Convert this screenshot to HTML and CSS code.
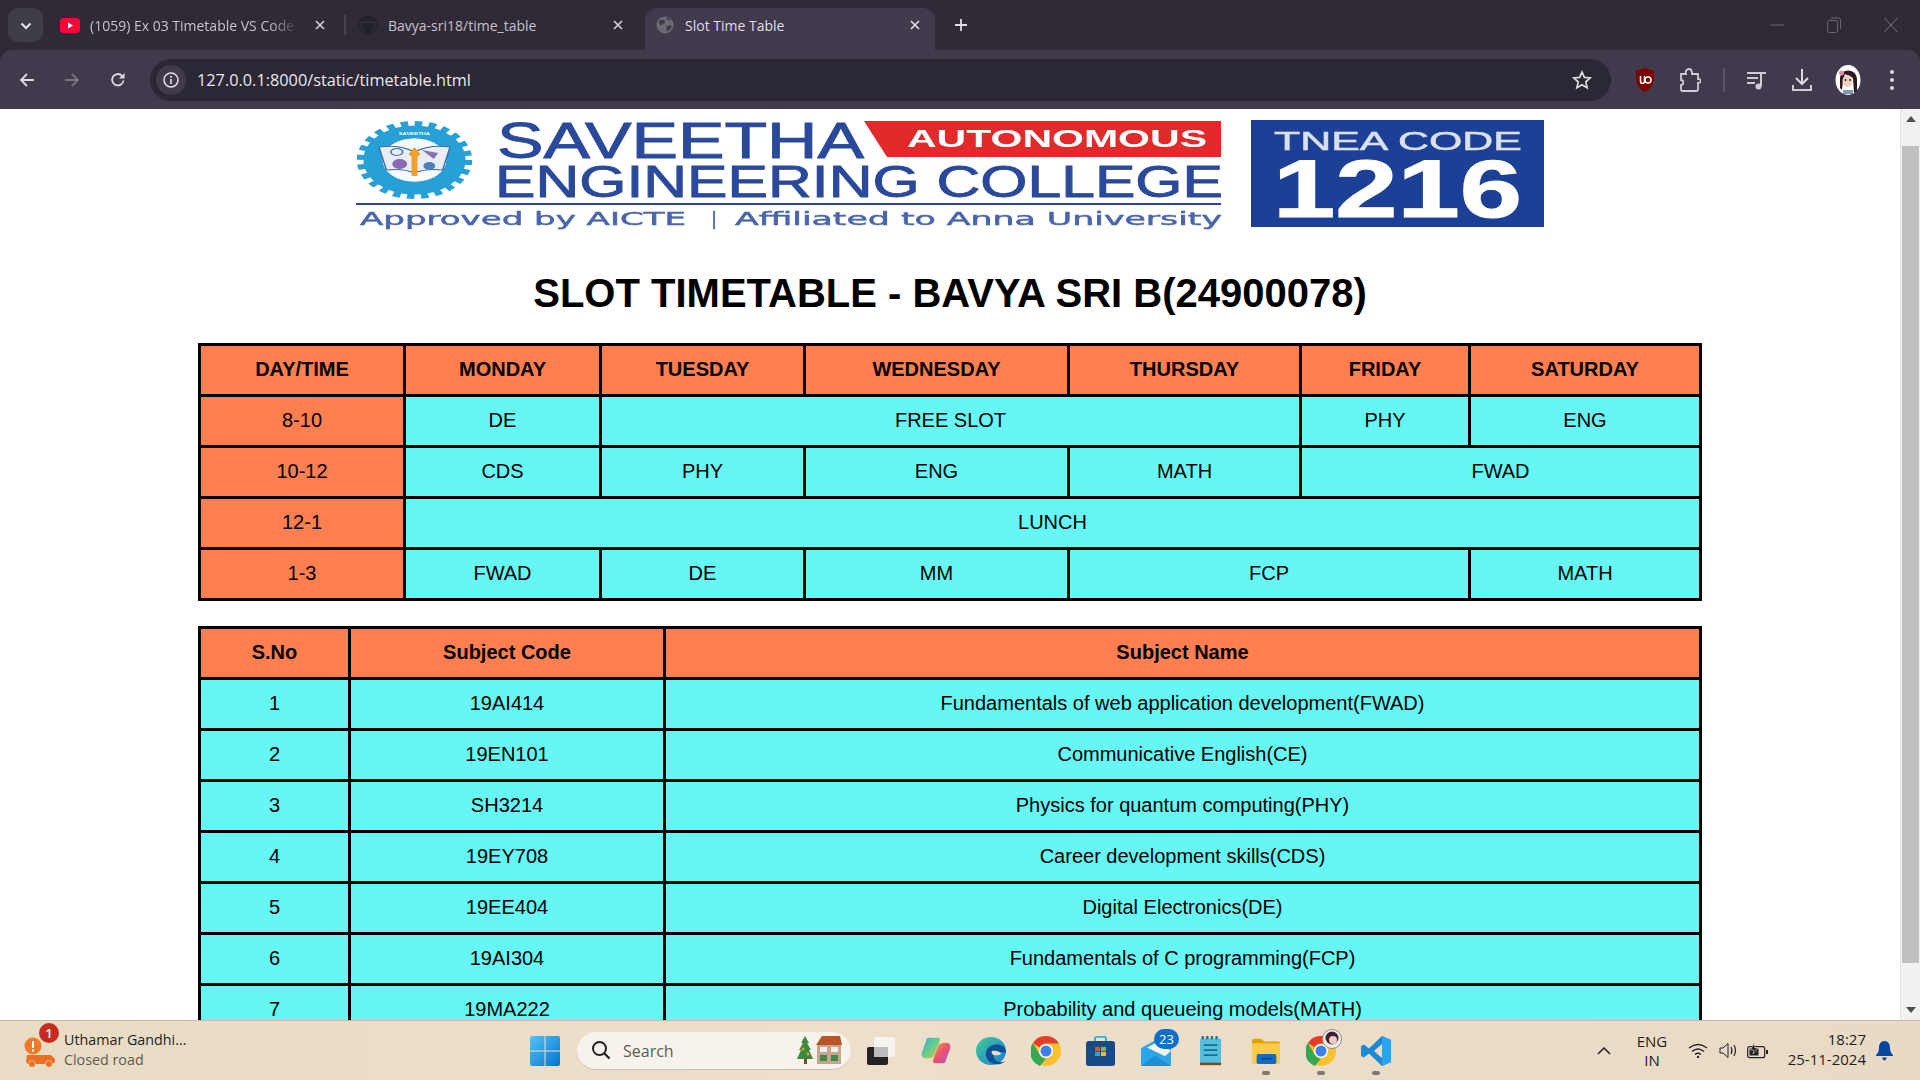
FILE: index.html
```html
<!DOCTYPE html>
<html lang="en">
    <head>
        <title>Slot Time Table</title>
        <meta charset="utf-8">
        <link rel="stylesheet" href="styles.css">
    </head>
    <body>
        <header class="tabstrip">
            <button class="tab-list"><svg width="12" height="8" viewBox="0 0 12 8"><path d="M1.5 1.5 6 6l4.5-4.5" fill="none" stroke="#e8e6ec" stroke-width="2"/></svg></button>
            <div class="tab tab-first">
                <svg class="favicon" width="20" height="15" viewBox="0 0 20 15"><rect width="20" height="15" rx="3.5" fill="#f6073a"/><path d="M8 4.5 13 7.5 8 10.500z" fill="#fff"/></svg>
                <span class="tab-title">(1059) Ex 03 Timetable VS Code</span>
                <svg class="tab-close" width="10" height="10" viewBox="0 0 10 10"><path d="M1 1l8 8M9 1 1 9" stroke="#d6d2dc" stroke-width="1.600"/></svg>
            </div>
            <div class="tab-sep"></div>
            <div class="tab tab-second">
                <svg class="favicon" width="20" height="20" viewBox="0 0 20 20"><circle cx="10" cy="10" r="9.500" fill="#24202a"/><path d="M6 18v-3c-2 0-3-1-3-5 0-2 1-3 1-3l3 .5h6l3-.5s1 1 1 3c0 4-1 5-3 5v3" fill="none" stroke="#33303a" stroke-width="1.500"/></svg>
                <span class="tab-title">Bavya-sri18/time_table</span>
                <svg class="tab-close" width="10" height="10" viewBox="0 0 10 10"><path d="M1 1l8 8M9 1 1 9" stroke="#d6d2dc" stroke-width="1.600"/></svg>
            </div>
            <div class="tab tab-active">
                <svg class="favicon" width="18" height="18" viewBox="0 0 18 18"><circle cx="9" cy="9" r="8.500" fill="#6b6a70"/><path d="M3 5c3-2 5-1 6 0 1 2-2 2-3 4-1 1-3 0-3-4zM11 10c2-1 4-1 5 0-1 3-3 5-5 5-1-2-1-3 0-5zM10 1.500c2 0 4 1 5 3-2 0-4 0-5-3z" fill="#413a4c"/></svg>
                <span class="tab-title">Slot Time Table</span>
                <svg class="tab-close" width="10" height="10" viewBox="0 0 10 10"><path d="M1 1l8 8M9 1 1 9" stroke="#e4e1e8" stroke-width="1.600"/></svg>
            </div>
            <svg class="new-tab" width="14" height="14" viewBox="0 0 14 14"><path d="M7 1v12M1 7h12" stroke="#dedbe3" stroke-width="1.800"/></svg>
            <div class="window-btns">
                <svg width="14" height="14" viewBox="0 0 14 14"><path d="M0 7h14" stroke="#6a6670"/></svg>
                <svg width="14" height="16" viewBox="0 0 14 16"><rect x=".5" y="3.500" width="10" height="12" rx="2" fill="none" stroke="#6a6670"/><path d="M4 1h7.500q2 0 2 2v9" fill="none" stroke="#6a6670"/></svg>
                <svg width="14" height="16" viewBox="0 0 14 16"><path d="M.5 1l13 14M13.500 1 .5 15" stroke="#77737c" fill="none"/></svg>
            </div>
        </header>

        <nav class="toolbar">
            <svg class="nav-back" width="16" height="16" viewBox="0 0 16 16"><path d="M15 8H2M8 2 2 8l6 6" fill="none" stroke="#dcd9e1" stroke-width="1.800"/></svg>
            <svg class="nav-fwd" width="16" height="16" viewBox="0 0 16 16"><path d="M1 8h13M8 2l6 6-6 6" fill="none" stroke="#77727f" stroke-width="1.800"/></svg>
            <svg class="nav-reload" width="16" height="16" viewBox="0 0 16 16"><path d="M13.500 8.500A5.700 5.700 0 1 1 12 3.800" fill="none" stroke="#dcd9e1" stroke-width="1.800"/><path d="M14.500 1v5.500H9z" fill="#dcd9e1"/></svg>
            <div class="omnibox">
                <span class="site-info"><svg width="16" height="16" viewBox="0 0 16 16"><circle cx="8" cy="8" r="7" fill="none" stroke="#e4e1e8" stroke-width="1.500"/><path d="M8 7v5" stroke="#e4e1e8" stroke-width="1.600"/><circle cx="8" cy="4.700" r="1" fill="#e4e1e8"/></svg></span>
                <span class="url">127.0.0.1:8000/static/timetable.html</span>
                <svg class="star" width="20" height="20" viewBox="0 0 20 20"><path d="M10 2l2.400 5.400 5.800.6-4.400 3.900 1.300 5.800L10 14.700l-5.100 3 1.300-5.800L1.800 8l5.800-.6z" fill="none" stroke="#dcd9e1" stroke-width="1.700"/></svg>
            </div>
            <div class="toolbar-icons">
                <svg class="ti-ublock" width="20" height="24" viewBox="0 0 20 24"><path d="M10 0l9 3c0 10 0 16-9 21C1 19 1 13 1 3z" fill="#800000"/><path d="M5.500 8v5q0 2.500 2 2.500t2-2.500V8" fill="none" stroke="#fff" stroke-width="1.500"/><circle cx="13" cy="12" r="3" fill="none" stroke="#fff" stroke-width="1.500"/></svg>
                <svg class="ti-puzzle" width="22" height="24" viewBox="0 0 22 24"><path d="M2 6h5c-1-3 1-5 3-5s3 2 3 5h6v5c2 0 3 1 3 2s-1 2-3 2v6q0 2-2 2H3l-1-1v-5c3 0 3-5 0-5z" fill="none" stroke="#cfc9da" stroke-width="1.800"/></svg>
                <span class="ti-sep"></span>
                <svg class="ti-media" width="20" height="20" viewBox="0 0 20 20"><path d="M0 3h14M0 8h11M0 13h8" stroke="#cfc9da" stroke-width="2"/><path d="M14 16V3h5" fill="none" stroke="#cfc9da" stroke-width="2"/><circle cx="11.500" cy="16.500" r="3" fill="#cfc9da"/></svg>
                <svg class="ti-down" width="20" height="24" viewBox="0 0 20 24"><path d="M10 1v15M4 10l6 6 6-6" fill="none" stroke="#dcd9e1" stroke-width="2"/><path d="M1 17v5h18v-5" fill="none" stroke="#cfc9da" stroke-width="2"/></svg>
                <svg class="ti-avatar" width="26" height="30" viewBox="0 0 26 30"><ellipse cx="13" cy="15" rx="12.500" ry="15" fill="#fff"/><path d="M5 15C4 3 21 2 22 14v12l-3 2-1-15-8-4-2 6-1 10-2-2z" fill="#2e1720"/><ellipse cx="12.500" cy="16" rx="5" ry="6" fill="#f2cfc0"/><circle cx="6.500" cy="8" r="2.500" fill="#f08ca0"/><circle cx="10.500" cy="15" r=".9" fill="#2e1720"/><circle cx="15" cy="15" r=".9" fill="#2e1720"/><path d="M8 25h10v4H8z" fill="#7c9aa8"/></svg>
                <svg class="ti-menu" width="6" height="22" viewBox="0 0 6 22"><circle cx="3" cy="3" r="2" fill="#dcd9e1"/><circle cx="3" cy="11" r="2" fill="#dcd9e1"/><circle cx="3" cy="19" r="2" fill="#dcd9e1"/></svg>
            </div>
        </nav>

        <div class="viewport">
            <main class="page">
                <svg class="logo" width="1220" height="125" viewBox="340 110 1220 125">
                    <defs><filter id="soft"><feGaussianBlur stdDeviation="0.700"/></filter></defs>
                    <g filter="url(#soft)" font-family="Liberation Sans, sans-serif">
                        <!-- gear, drawn round then stretched like the source image -->
                        <g transform="translate(414.500 160) scale(1.480 1)">
                            <circle r="36" fill="none" stroke="#27a0d6" stroke-width="6" stroke-dasharray="5 4.420"/>
                            <circle r="28" fill="none" stroke="#27a0d6" stroke-width="13"/>
                            <circle r="21.500" fill="#f7fafd"/>
                            <text y="-25" text-anchor="middle" font-size="4" font-weight="700" fill="#fff">SAVEETHA</text>
                            <path d="M-24 -13Q-10 -16 0 -8Q10 -16 24 -13L19 10Q8 8 0 13Q-8 8 -19 10z" fill="#e9eef6" stroke="#3a6aa8"/>
                            <circle cx="-10" cy="4" r="5" fill="#8b68b3"/>
                            <circle cx="10" cy="6" r="4" fill="#4a7fc0"/>
                            <path d="M5 -10l11 3-3 6z" fill="#8a72b0"/>
                            <ellipse cx="-12" cy="-8" rx="4" ry="3.500" fill="none" stroke="#3a6aa8"/>
                            <path d="M0 -13l4 7-2 3V16H-2V-3l-2-3z" fill="#f3a02c"/>
                        </g>
                        <text x="497" y="158" font-size="50" fill="#2b4a9b" stroke="#2b4a9b" stroke-width=".9" textLength="367" lengthAdjust="spacingAndGlyphs">SAVEETHA</text>
                        <path d="M864 121H1221V157H887z" fill="#e32a2a"/>
                        <text x="907" y="147" font-size="24" font-weight="700" fill="#fff" textLength="300" lengthAdjust="spacingAndGlyphs">AUTONOMOUS</text>
                        <text x="495" y="197" font-size="45" fill="#2b4a9b" stroke="#2b4a9b" stroke-width=".9" textLength="728" lengthAdjust="spacingAndGlyphs">ENGINEERING COLLEGE</text>
                        <path d="M356 204H1221" stroke="#2b4a9b" stroke-width="2"/>
                        <g font-family="DejaVu Sans, sans-serif" font-size="18" fill="#4a66ac" stroke="#4a66ac" stroke-width=".5">
                            <text x="360" y="225" textLength="326" lengthAdjust="spacingAndGlyphs">Approved by AICTE</text>
                            <text x="711" y="225">|</text>
                            <text x="735" y="225" textLength="487" lengthAdjust="spacingAndGlyphs">Affiliated to Anna University</text>
                        </g>
                        <rect x="1251" y="120" width="293" height="107" fill="#1f4095"/>
                        <text x="1274" y="150" font-size="25" fill="#d9e0ef" stroke="#d9e0ef" stroke-width=".5" textLength="248" lengthAdjust="spacingAndGlyphs">TNEA CODE</text>
                        <text x="1273" y="217" font-size="82" font-weight="700" fill="#fff" stroke="#fff" textLength="249" lengthAdjust="spacingAndGlyphs">1216</text>
                    </g>
                </svg>

                <h1 class="page-title">SLOT TIMETABLE - BAVYA SRI B(24900078)</h1>

                <table class="grid slots">
                    <colgroup>
                        <col class="s1"><col class="s2"><col class="s3"><col class="s4"><col class="s5"><col class="s6"><col class="s7">
                    </colgroup>
                    <tr><th>DAY/TIME</th><th>MONDAY</th><th>TUESDAY</th><th>WEDNESDAY</th><th>THURSDAY</th><th>FRIDAY</th><th>SATURDAY</th></tr>
                    <tr><td class="time">8-10</td><td>DE</td><td colspan="3">FREE SLOT</td><td>PHY</td><td>ENG</td></tr>
                    <tr><td class="time">10-12</td><td>CDS</td><td>PHY</td><td>ENG</td><td>MATH</td><td colspan="2">FWAD</td></tr>
                    <tr><td class="time">12-1</td><td colspan="6">LUNCH</td></tr>
                    <tr><td class="time">1-3</td><td>FWAD</td><td>DE</td><td>MM</td><td colspan="2">FCP</td><td>MATH</td></tr>
                </table>

                <table class="grid subjects">
                    <colgroup>
                        <col class="n1"><col class="n2"><col class="n3">
                    </colgroup>
                    <tr><th>S.No</th><th>Subject Code</th><th>Subject Name</th></tr>
                    <tr><td>1</td><td>19AI414</td><td>Fundamentals of web application development(FWAD)</td></tr>
                    <tr><td>2</td><td>19EN101</td><td>Communicative English(CE)</td></tr>
                    <tr><td>3</td><td>SH3214</td><td>Physics for quantum computing(PHY)</td></tr>
                    <tr><td>4</td><td>19EY708</td><td>Career development skills(CDS)</td></tr>
                    <tr><td>5</td><td>19EE404</td><td>Digital Electronics(DE)</td></tr>
                    <tr><td>6</td><td>19AI304</td><td>Fundamentals of C programming(FCP)</td></tr>
                    <tr><td>7</td><td>19MA222</td><td>Probability and queueing models(MATH)</td></tr>
                </table>
            </main>
            <div class="scrollbar">
                <svg width="10" height="6" viewBox="0 0 10 6"><path d="M5 0l5 6H0z" fill="#505050"/></svg>
                <div class="thumb"></div>
                <svg width="10" height="6" viewBox="0 0 10 6"><path d="M5 6 0 0h10z" fill="#505050"/></svg>
            </div>
        </div>

        <footer class="taskbar">
            <div class="widget">
                <svg width="34" height="36" viewBox="0 0 34 36"><circle cx="9" cy="13" r="8.500" fill="#f07a28"/><path d="M8 8h2v7H8zM8 16.500h2v2H8z" fill="#fff"/><path d="M3 22h24l4 4v3l-3 2H4l-2-2z" fill="#ee6f24"/><circle cx="8" cy="31" r="3.500" fill="#f3e3cc"/><circle cx="25" cy="31" r="3.500" fill="#f3e3cc"/><circle cx="8" cy="31" r="3" fill="#ee6f24"/><circle cx="25" cy="31" r="3" fill="#ee6f24"/></svg>
                <span class="widget-badge">1</span>
                <div class="widget-text">
                    <span class="widget-title">Uthamar Gandhi...</span>
                    <span class="widget-sub">Closed road</span>
                </div>
            </div>

            <svg class="win-logo" width="30" height="30" viewBox="0 0 30 30">
                <defs><linearGradient id="wl" x1="0" y1="0" x2="1" y2="1"><stop offset="0" stop-color="#52c6f5"/><stop offset="1" stop-color="#0473cf"/></linearGradient></defs>
                <path d="M0 2q0-2 2-2h12.500v14.500H0zM15.500 0H28q2 0 2 2v12.500H15.500zM0 15.500h14.500V30H2q-2 0-2-2zM15.500 15.500H30V28q0 2-2 2H15.500z" fill="url(#wl)"/>
            </svg>

            <div class="search">
                <svg width="20" height="20" viewBox="0 0 20 20"><circle cx="8.500" cy="8.500" r="6.500" fill="none" stroke="#222" stroke-width="2"/><path d="M13 13l5.500 5.500" stroke="#222" stroke-width="2.200"/></svg>
                <span class="search-label">Search</span>
                <svg class="search-art" width="46" height="30" viewBox="0 0 46 30"><path d="M9 1l4 7h-2l4 7h-2l4 9H1l4-9H3l4-7H5z" fill="#3d8a3e"/><rect x="8" y="24" width="3" height="5" fill="#7a4a22"/><circle cx="7" cy="14" r="1.500" fill="#e99a2a"/><circle cx="12" cy="19" r="1.500" fill="#e99a2a"/><path d="M20 10 26 1h18l2 9z" fill="#b8562a"/><rect x="21" y="10" width="24" height="19" fill="#c9a48d"/><rect x="24" y="12" width="7" height="5" fill="#eef0ee"/><rect x="35" y="12" width="7" height="5" fill="#eef0ee"/><rect x="24" y="20" width="7" height="6" fill="#3f8a4a"/><rect x="35" y="20" width="7" height="6" fill="#3f8a4a"/></svg>
            </div>

            <div class="apps">
                <span class="app"><svg width="30" height="30" viewBox="0 0 30 30"><rect x="1" y="11" width="21" height="18" rx="2" fill="#222"/><rect x="8" y="1" width="21" height="20" rx="2" fill="#f6f4f1"/><rect x="8" y="11" width="14" height="10" fill="#bdbbb9"/></svg></span>
                <span class="app"><svg width="30" height="29" viewBox="0 0 30 34" preserveAspectRatio="none"><defs><linearGradient id="cp1" x1="0" y1="0" x2="1" y2="1"><stop offset="0" stop-color="#39a6e8"/><stop offset=".5" stop-color="#62cf8a"/><stop offset="1" stop-color="#f2c43a"/></linearGradient><linearGradient id="cp2" x1="0" y1="0" x2="1" y2="1"><stop offset="0" stop-color="#f6a23c"/><stop offset=".5" stop-color="#ee4f6e"/><stop offset="1" stop-color="#9a5be8"/></linearGradient></defs><path d="M8 2h9c3 0 2 4 1 7l-4 12c-1 3-3 5-6 5H5c-4 0-5-4-4-7l4-13c0-2 1-4 3-4z" fill="url(#cp1)"/><path d="M22 32h-8c-3 0-2-4-1-7l4-12c1-3 3-5 6-5h2c4 0 5 4 4 7l-4 13c0 2-1 4-3 4z" fill="url(#cp2)"/></svg></span>
                <span class="app"><svg width="30" height="30" viewBox="0 0 30 32" preserveAspectRatio="none"><defs><linearGradient id="ed" x1="0" y1="0" x2="1" y2="1"><stop offset="0" stop-color="#3ecb9c"/><stop offset="1" stop-color="#1a7fd1"/></linearGradient></defs><circle cx="15" cy="16" r="15" fill="url(#ed)"/><path d="M30 18c0-7-6-10-11-9-6 1-10 6-9 12 1 6 7 10 14 9 3-1 4-2 5-3-4 2-10 1-11-4-1-3 1-6 4-6 4 0 8 1 8 1z" fill="#0f4f9a"/><path d="M16 16c3-1 8 0 9 3-2 2-6 2-8 1-1-1-2-3-1-4z" fill="#eadfcc"/></svg></span>
                <span class="app"><svg class="chrome" width="30" height="30" viewBox="0 0 30 30"><circle cx="15" cy="15" r="15" fill="#fbc02d"/><path d="M15 0a15 15 0 0 1 13 7.500H15a7.500 7.500 0 0 0-6.500 3.750L2 7A15 15 0 0 1 15 0z" fill="#e53c2e"/><path d="M2 7l6.500 11.250A7.500 7.500 0 0 0 15 22.500L9 30A15 15 0 0 1 2 7z" fill="#36a852"/><circle cx="15" cy="15" r="7" fill="#fff"/><circle cx="15" cy="15" r="5.500" fill="#3d7ff0"/></svg></span>
                <span class="app"><svg width="29" height="30" viewBox="0 0 29 36" preserveAspectRatio="none"><path d="M9 8V3q0-2 2-2h7q2 0 2 2v5" fill="none" stroke="#2cb3e6" stroke-width="2"/><path d="M0 9q0-3 3-3h23q3 0 3 3v24q0 3-3 3H3q-3 0-3-3z" fill="#164b85"/><rect x="9" y="13" width="5" height="5" fill="#e8502d"/><rect x="15" y="13" width="5" height="5" fill="#7fba30"/><rect x="9" y="19" width="5" height="5" fill="#23a3e8"/><rect x="15" y="19" width="5" height="5" fill="#f5b919"/></svg></span>
                <span class="app"><svg width="30" height="30" viewBox="0 0 30 34" preserveAspectRatio="none"><path d="M0 34V14L17 3l13 7v24z" fill="#2aa6e6"/><path d="M0 34l14-12 16 12z" fill="#1b8fd8"/><path d="M6 13l12-7 12 11-6 6z" fill="#f4f3f1"/></svg><span class="mail-badge">23</span></span>
                <span class="app"><svg width="22" height="30" viewBox="0 0 24 36" preserveAspectRatio="none"><rect x="0" y="3" width="23" height="30" rx="2" fill="#55bfe0"/><rect y="32" width="23" height="3" fill="#85471c"/><path d="M3 3V1M8 3V1M13 3V1M18 3V1" stroke="#1f6f8e" stroke-width="2.500" stroke-linecap="round"/><path d="M4 11h15M4 17h15M4 23h15" stroke="#1c6d92" stroke-width="2.200"/></svg></span>
                <span class="app app-running"><svg width="30" height="27" viewBox="0 0 32 30" preserveAspectRatio="none"><path d="M1 4q0-2 2-2h8l3 3h15q2 0 2 2v3H1z" fill="#e2a208"/><path d="M1 7h30v21q0 2-2 2H3q-2 0-2-2z" fill="#fdcb48"/><rect x="6" y="19" width="21" height="11" rx="2" fill="#0f6cc0"/><path d="M11 24h11" stroke="#0b3f7a" stroke-width="1.500"/></svg></span>
                <span class="app app-running"><svg class="chrome" width="30" height="30" viewBox="0 0 30 30"><circle cx="15" cy="15" r="15" fill="#fbc02d"/><path d="M15 0a15 15 0 0 1 13 7.500H15a7.500 7.500 0 0 0-6.500 3.750L2 7A15 15 0 0 1 15 0z" fill="#e53c2e"/><path d="M2 7l6.500 11.250A7.500 7.500 0 0 0 15 22.500L9 30A15 15 0 0 1 2 7z" fill="#36a852"/><circle cx="15" cy="15" r="7" fill="#fff"/><circle cx="15" cy="15" r="5.500" fill="#3d7ff0"/></svg><svg class="app-avatar" width="20" height="20" viewBox="0 0 20 20"><circle cx="10" cy="10" r="9.500" fill="#f4f0ee" stroke="#8d8a88"/><circle cx="10" cy="9" r="6.500" fill="#3c1f2a"/><circle cx="11" cy="11" r="4" fill="#f2c9c5"/></svg></span>
                <span class="app app-running"><svg width="30" height="30" viewBox="0 0 30 30"><path d="M21 0l9 4v22l-9 4L8 17.500 3 21.500 0 20V10l3-1.500 5 4zM21 8l-8 7 8 7z" fill="#1a8ad8"/><path d="M21 0l9 4v22l-9 4z" fill="#2aa5ef"/></svg></span>
            </div>

            <div class="tray">
                <svg class="tray-caret" width="14" height="8" viewBox="0 0 14 8"><path d="M1 7l6-6 6 6" fill="none" stroke="#222" stroke-width="1.500"/></svg>
                <div class="lang"><span>ENG</span><span>IN</span></div>
                <svg class="tray-wifi" width="20" height="15" viewBox="0 0 20 15"><path d="M1 5q9-7 18 0M4 8.500q6-5 12 0M7 11.500q3-2.500 6 0" fill="none" stroke="#222" stroke-width="1.300"/><circle cx="10" cy="14" r="1.200" fill="#222"/></svg>
                <svg class="tray-vol" width="20" height="17" viewBox="0 0 20 17"><path d="M1 6h3l5-4.500v14L4 11H1z" fill="none" stroke="#222"/><path d="M12 5q2 3.500 0 7M15 3q3 5.500 0 11" fill="none" stroke="#222" stroke-width="1.100"/></svg>
                <svg class="tray-batt" width="22" height="16" viewBox="0 0 22 16"><rect x=".7" y="3.700" width="17" height="11" rx="2" fill="none" stroke="#222" stroke-width="1.200"/><path d="M2.500 5.500h9v7h-9z" fill="#222"/><path d="M19 7h2v4h-2z" fill="#222"/><path d="M7 0 3.500 7H7l-1 4 5-6H8z" fill="#222" stroke="#eadcc8" stroke-width=".6"/></svg>
                <div class="clock"><span>18:27</span><span>25-11-2024</span></div>
                <svg class="tray-bell" width="17" height="20" viewBox="0 0 17 20"><path d="M8.500 0C4 0 3 4 3 7c0 3-1 5-3 7v1h17v-1c-2-2-3-4-3-7 0-3-1-7-5.500-7z" fill="#0a47a0"/><path d="M6 16.500h5q-1 3-2.500 3T6 16.500z" fill="#0a47a0"/></svg>
            </div>
        </footer>
    </body>
</html>
```

FILE: styles.css
```css
html, body {
  margin: 0;
  height: 100%;
}

body {
  display: flex;
  flex-direction: column;
  height: 1080px;
  overflow: hidden;
  background: #2f2a36;
  font-family: "Open Sans", "Noto Sans", sans-serif;
}

/* browser chrome */
.tabstrip {
  flex: 0 0 50px;
  display: flex;
  align-items: flex-start;
  background: #2f2a36;
  color: #c6c0cd;
  font-size: 14px;
}

.tab-list {
  flex: none;
  width: 35px;
  height: 34px;
  margin: 8px 0 0 8px;
  padding: 0;
  border: 0;
  border-radius: 10px;
  background: #413d47;
}

.tab {
  flex: none;
  display: flex;
  align-items: center;
  height: 42px;
  margin-top: 8px;
  box-sizing: border-box;
  position: relative;
}

.tab-first {
  width: 301px;
  padding-left: 17px;
}

.tab-second {
  width: 292px;
  padding-left: 12px;
}

.tab-active {
  width: 290px;
  padding-left: 11px;
  margin-left: 7px;
  background: #413a4c;
  border-radius: 12px 12px 0 0;
  color: #e0dce5;
}

.favicon {
  flex: none;
}

.tab-title {
  flex: 1;
  margin-left: 10px;
  white-space: nowrap;
  overflow: hidden;
  margin-top: -8px;
}

.tab-active .tab-title {
  margin-left: 11px;
}

.tab .favicon,
.tab .tab-close {
  margin-top: -8px;
}

.tab-first .tab-title {
  -webkit-mask-image: linear-gradient(90deg, #000 85%, transparent);
  mask-image: linear-gradient(90deg, #000 85%, transparent);
}

.tab-close {
  flex: none;
  margin: 0 15px 0 15px;
}

.tab-first .tab-close {
  margin-right: 19px;
}

.tab-sep {
  flex: none;
  width: 2px;
  height: 20px;
  margin-top: 15px;
  background: #47434d;
}

.new-tab {
  flex: none;
  margin: 18px 0 0 19px;
}

.window-btns {
  margin-left: auto;
  display: flex;
  gap: 43px;
  align-items: center;
  height: 50px;
  padding-right: 22px;
}

.toolbar {
  flex: 0 0 59px;
  display: flex;
  align-items: center;
  padding-left: 19px;
  background: #413a4c;
  border-radius: 12px 12px 0 0;
  box-sizing: border-box;
  position: relative;
}

.nav-fwd {
  margin-left: 29px;
}

.nav-reload {
  margin-left: 30px;
}

.omnibox {
  width: 1461px;
  height: 42px;
  margin-left: 24px;
  display: flex;
  align-items: center;
  background: #2c2735;
  border-radius: 21px;
  flex: none;
}

.site-info {
  display: flex;
  align-items: center;
  justify-content: center;
  width: 30px;
  height: 30px;
  margin-left: 6px;
  border-radius: 50%;
  background: #413a4c;
}

.url {
  margin-left: 11px;
  font-size: 16.3px;
  color: #e9e6ee;
  white-space: nowrap;
}

.star {
  margin-left: auto;
  margin-right: 19px;
}

.toolbar-icons {
  display: flex;
  align-items: center;
  margin-left: 24px;
}

.ti-puzzle {
  margin-left: 24px;
}

.ti-sep {
  width: 2px;
  height: 24px;
  margin: 0 22px;
  background: #5b5467;
}

.ti-down {
  margin-left: 25px;
}

.ti-avatar {
  margin-left: 23px;
}

.ti-menu {
  margin-left: 28px;
}

/* page area */
.viewport {
  flex: 0 0 911px;
  display: flex;
  overflow: hidden;
  background: #fff;
}

.page {
  flex: 1;
  min-width: 0;
  overflow: hidden;
  font-family: "Liberation Sans", Arial, sans-serif;
}

.logo {
  display: block;
  margin: 1px auto 0;
}

.page-title {
  margin: 35px 0 27px;
  font-size: 40px;
  line-height: 46px;
  text-align: center;
  color: #000;
}

.grid {
  border-collapse: collapse;
  table-layout: fixed;
  width: 1501px;
  margin: 0 auto 25px;
  border: 3px solid #000;
  font-size: 20px;
}

.grid th,
.grid td {
  height: 46px;
  padding: 0 0 2px;
  border: 3px solid #000;
  text-align: center;
  color: #000;
  background: #66f7f4;
}

.grid th,
.grid .time {
  background: #ff7f50;
}

.s1 { width: 205px; }
.s2 { width: 196px; }
.s3 { width: 204px; }
.s4 { width: 264px; }
.s5 { width: 232px; }
.s6 { width: 169px; }
.s7 { width: 231px; }

.n1 { width: 150px; }
.n2 { width: 315px; }
.n3 { width: 1036px; }

.scrollbar {
  flex: 0 0 20px;
  display: flex;
  flex-direction: column;
  align-items: center;
  background: #f1f1f1;
  border-left: 1px solid #e4e4e4;
  box-sizing: border-box;
}

.scrollbar svg {
  flex: none;
  margin: 7px 0;
}

.thumb {
  flex: none;
  width: 17px;
  height: 817px;
  margin: 17px 0 auto;
  background: #c0c0c0;
}

/* windows taskbar */
.taskbar {
  flex: 0 0 60px;
  display: flex;
  align-items: center;
  box-sizing: border-box;
  border-top: 1px solid #c6bdb0;
  background: linear-gradient(90deg, #e8dcc4, #eedfca 45%, #e9dac6);
  color: #1f1f1f;
  font-size: 14.3px;
}

.widget {
  flex: none;
  display: flex;
  align-items: center;
  position: relative;
  width: 530px;
  padding-left: 24px;
  box-sizing: border-box;
}

.widget-badge {
  position: absolute;
  left: 39px;
  top: -7px;
  width: 20px;
  height: 20px;
  border-radius: 50%;
  background: #c62b22;
  color: #fff;
  font-size: 13px;
  font-weight: 600;
  line-height: 20px;
  text-align: center;
}

.widget-text {
  display: flex;
  flex-direction: column;
  margin: 0 0 2px 6px;
  line-height: 20px;
}

.widget-sub {
  color: #5f5b55;
}

.win-logo {
  flex: none;
}

.search {
  flex: none;
  display: flex;
  align-items: center;
  width: 274px;
  height: 38px;
  margin-left: 17px;
  box-sizing: border-box;
  padding-left: 14px;
  background: #f7f3ec;
  border-radius: 19px;
  border-bottom: 1px solid #cbbfb0;
}

.search-label {
  margin: 1px 0 0 12px;
  font-size: 16px;
  color: #5c5a57;
}

.search-art {
  margin-left: auto;
  margin-right: 9px;
}

.apps {
  display: flex;
  flex: none;
  margin-left: 2px;
}

.app {
  position: relative;
  display: flex;
  align-items: center;
  justify-content: center;
  width: 55px;
  height: 44px;
}

.app-running::after {
  content: "";
  position: absolute;
  left: 24px;
  bottom: -2px;
  width: 8px;
  height: 4px;
  border-radius: 2px;
  background: #7d7971;
}

.mail-badge {
  position: absolute;
  left: 26px;
  top: 0;
  width: 25px;
  height: 20px;
  border-radius: 10px;
  background: #0d6fc8;
  color: #fff;
  font-size: 13px;
  line-height: 20px;
  text-align: center;
}

.app-avatar {
  position: absolute;
  left: 29px;
  top: 0;
}

.tray {
  flex: 1;
  display: flex;
  align-items: center;
  font-size: 15px;
  min-width: 0;
}

.tray-caret {
  margin-left: 194px;
}

.lang {
  display: flex;
  flex-direction: column;
  align-items: center;
  width: 40px;
  margin-left: 21px;
  line-height: 19px;
}

.tray-wifi {
  margin-left: 16px;
}

.tray-vol {
  margin-left: 11px;
}

.tray-batt {
  margin-left: 8px;
}

.clock {
  display: flex;
  flex-direction: column;
  align-items: flex-end;
  margin: 0 0 4px auto;
  line-height: 20px;
}

.tray-bell {
  margin: 0 27px 0 10px;
}
```
